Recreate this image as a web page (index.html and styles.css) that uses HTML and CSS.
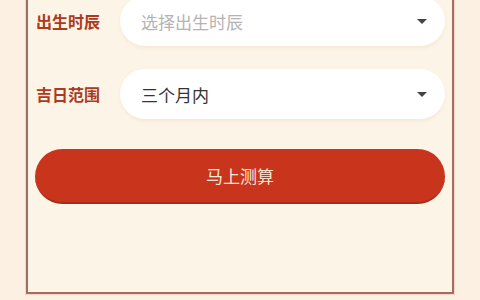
FILE: index.html
```html
<!DOCTYPE html>
<html lang="zh-CN">
<head>
    <meta charset="UTF-8">
    <meta name="viewport" content="width=device-width, initial-scale=1.0">
    <title>吉日查询</title>
    <link rel="stylesheet" href="styles.css">
</head>
<body>
    <div class="panel">
        <div class="form-row">
            <div class="form-label">出生时辰</div>
            <div class="form-select">
                <span class="placeholder">选择出生时辰</span>
                <span class="arrow"></span>
            </div>
        </div>
        <div class="form-row">
            <div class="form-label">吉日范围</div>
            <div class="form-select">
                <span class="value">三个月内</span>
                <span class="arrow"></span>
            </div>
        </div>
        <div class="submit-btn">马上测算</div>
    </div>
</body>
</html>
```

FILE: styles.css
```css
body {
    margin: 0;
    background-color: #fbf0e1;
    font-family: "Noto Sans CJK SC", "Noto Sans", sans-serif;
    height: 300px;
    overflow: hidden;
}
.panel {
    margin: -32px 0 0 26px;
    width: 428px;
    height: 326px;
    box-sizing: border-box;
    padding: 26px 7px 0 7px;
    background-color: #fcf4e6;
    border: 2px solid #a36d62;
    box-shadow: 0 0 0 1px #f3d6c8;
}
.form-row {
    display: flex;
    align-items: center;
    height: 50px;
    margin-bottom: 23px;
}
.form-label {
    width: 84px;
    padding-left: 1px;
    font-size: 16px;
    font-weight: bold;
    color: #ab3a20;
}
.form-select {
    flex: 1;
    height: 50px;
    border-radius: 25px;
    background-color: #fff;
    display: flex;
    align-items: center;
    justify-content: space-between;
    padding: 0 18px 0 21px;
    font-size: 17px;
    box-shadow: 0 2px 3px rgba(230, 200, 170, 0.25);
}
.placeholder {
    color: #b4b4b4;
}
.value {
    color: #333;
}
.arrow {
    width: 0;
    height: 0;
    border-left: 5px solid transparent;
    border-right: 5px solid transparent;
    border-top: 5px solid #444;
}
.submit-btn {
    margin-top: 30px;
    height: 55px;
    border-radius: 28px;
    background-color: #c8351c;
    border-bottom: 2px solid #a32e18;
    box-sizing: border-box;
    color: #fbe7d6;
    font-size: 17px;
    text-align: center;
    line-height: 53px;
}
```
